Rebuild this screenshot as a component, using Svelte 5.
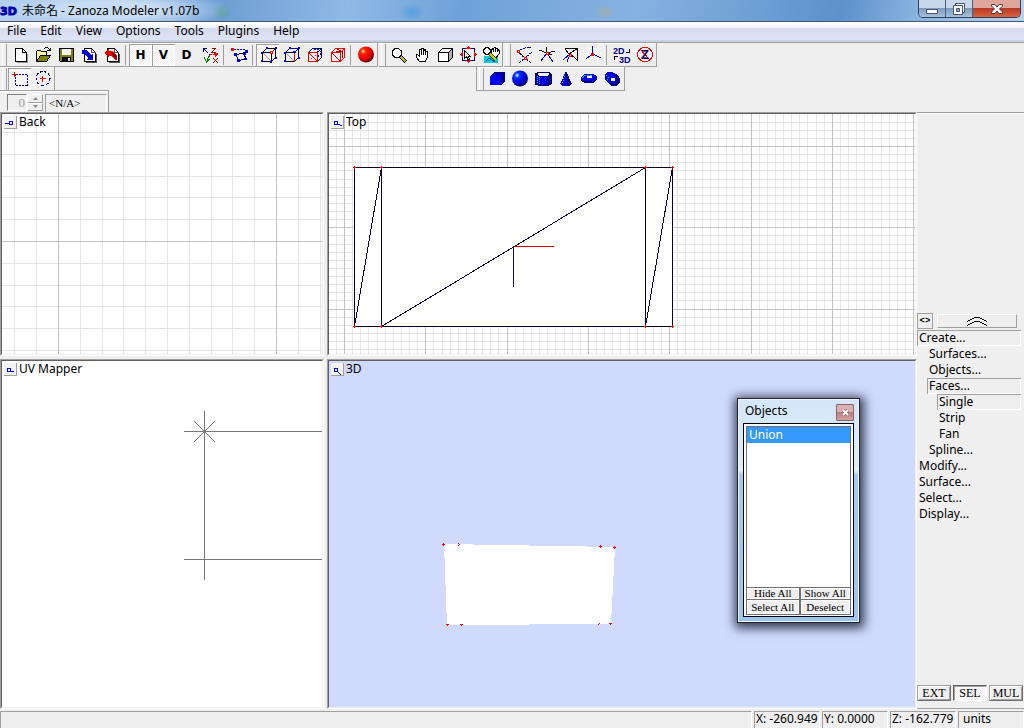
<script lang="ts">
  type Shape = { d?: string; f?: string; s?: string; w?: number; dash?: string; t?: string; x?: number; y?: number; size?: number }

  const cubeLines = 'M3.5 6.5H12.5V15.5H3.5ZM3.5 6.5L7.5 2.5H16.5L12.5 6.5M16.5 2.5V11.5L12.5 15.5'
  const page = 'M4.5 2.5H11.5L15.5 6.5V15.5H4.5Z'

  const icons: Record<string, Shape[]> = {
    New: [{ d: 'M6 16.5H16.5V8', s: '#999' }, { d: page, f: '#fff', s: '#000' }, { d: 'M11.5 2.5V6.5H15.5', s: '#000' }],
    Open: [
      { d: 'M2.5 15.5V5.5L3.5 4.5H6.5L7.5 5.5H12.5V9.5', f: '#ff9', s: '#000' },
      { d: 'M2.5 15.5L6.5 9.5H16.5L12.5 15.5Z', f: '#808000', s: '#000' },
      { d: 'M9.5 3.5L11.5 1.5H13.5L16 4M13 4.5H16.5V1.5', s: '#000' }
    ],
    Save: [
      { d: 'M2.5 2.5H16.5V15.5H3.5L2.5 14.5Z', f: '#808000', s: '#000' },
      { d: 'M5 3H14V9H5Z', f: '#f4f4f4', s: 'none' },
      { d: 'M5 11H14V16H5Z', f: '#000', s: 'none' },
      { d: 'M11 12H13V15H11Z', f: '#ddd', s: 'none' }
    ],
    Import: [
      { d: page, f: '#fff', s: '#000' }, { d: 'M11.5 2.5V6.5H15.5M6 16.5H16.5V8', s: '#555' },
      { d: 'M2 4H6L11 9L13 7V14H6L8 12L4 8H2Z', f: '#0000e0', s: 'none' }
    ],
    Export: [
      { d: page, f: '#fff', s: '#000' }, { d: 'M11.5 2.5V6.5H15.5M6 16.5H16.5V8', s: '#555' },
      { d: 'M1 7L6 3V5H9L14 10V14H12L8 10H6V12Z', f: '#e00000', s: 'none' },
      { d: 'M9 9L14 14V11L10 7Z', f: '#800000', s: 'none' }
    ],
    Axes: [
      { d: 'M9 9L3 3', s: '#00009a', dash: '2 1' },
      { d: 'M2 6V2H6V3H3V6Z', f: '#00009a', s: 'none' },
      { d: 'M9 9L14 8', s: '#f00', dash: '2 1' },
      { d: 'M13 6L18 8L14 11Z', f: '#f00', s: 'none' },
      { d: 'M9 9L6 14M3.5 11.5L5.5 16L8.5 13', s: '#008000' },
      { d: 'M10.5 2.5H14.5L10.5 6.5H14.5M12 12L17 17M17 12L12 17', s: '#900000' }
    ],
    Polyline: [
      { d: 'M4 3.5H15', s: '#00f', dash: '2 1' },
      { d: 'M16 6L6 9L9 15L16 12L14 9', s: '#000' },
      { d: 'M15 4H18V7H15ZM4 7H7V10H4ZM13 7H16V9H13ZM7 13H10V16H7ZM14 12H17V14H14Z', f: '#0000f0', s: 'none' },
      { d: 'M1 2H4V5H1Z', f: '#f00', s: 'none' }
    ],
    Vertices: [
      { d: cubeLines, f: '#f4f4f4', s: '#000' }, { d: 'M4 7L12 15', s: '#999' },
      { d: 'M2 6H4V8H2ZM2 14H4V16H2ZM7 1H9V3H7ZM16 1H18V3H16ZM16 11H18V13H16ZM11 15H13V17H11Z', f: '#00f', s: 'none' },
      { d: 'M11.5 5.5H13.5V7.5H11.5Z', f: '#fff', s: '#f00' }
    ],
    Edges: [
      { d: cubeLines, s: '#000' }, { d: 'M4 7L12 15', s: '#999' },
      { d: 'M3.5 6.5L7.5 2.5H16.5', s: '#00f', dash: '2 1' },
      { d: 'M2 6H4V8H2ZM2 14H4V16H2ZM7 1H9V3H7ZM16 1H18V3H16ZM16 11H18V13H16Z', f: '#00f', s: 'none' },
      { d: 'M12.5 6V16', s: '#f00' }, { d: 'M11 5H14V7H11Z', f: '#00f', s: 'none' }
    ],
    Faces: [
      { d: cubeLines, s: '#000080' }, { d: 'M9 3L14 6M12 3L15 5V10M13 11L16 7', s: '#000080', dash: '2 1' },
      { d: 'M3.5 6.5H12.5V15.5H3.5ZM4 7L12 15', s: '#e00000' }, { d: 'M6 12H7V13H6ZM10 9H11V10H10Z', f: '#f00', s: 'none' }
    ],
    Solids: [{ d: cubeLines, s: '#f00' }, { d: 'M4 7L12 15M8 5H13L9 3M14 5V12', s: '#a00000' }],
    Zoom: [
      { d: 'M5 2.5H8L11.5 5V9L8.5 11.5H5L2.5 9V5Z', f: '#fff', s: '#000' },
      { d: 'M10.5 10.5L16 16', s: '#000', w: 4 }, { d: 'M11 11L15.5 15.5', s: '#c8c000', w: 2 }
    ],
    Pan: [{ d: 'M6.5 15.5L3 10.5V8.5H4.5L6 10V4.5L7 3.5L8.5 4.5V2.5H10.5V4.5L12.5 3.5V6L14.5 5.5V11L12.5 15.5Z', f: '#fff', s: '#000' }, { d: 'M8.5 4V9M10.5 4V9M12.5 5V9', s: '#000' }],
    Orbit: [
      { d: 'M2.5 6.5L6.5 2.5H16.5L12.5 6.5Z', f: '#fff', s: '#000' },
      { d: 'M12.5 6.5L16.5 2.5V11.5L12.5 15.5Z', f: '#b0b0b0', s: '#000' },
      { d: 'M2.5 6.5H12.5V15.5H2.5Z', f: '#fff', s: '#000' }
    ],
    Fit: [
      { d: 'M3.5 2.5H15.5V14.5H3.5Z', s: '#000080' },
      { d: 'M9.5 0L12 3H7ZM9.5 17L12 14H7ZM1 8.5L4 6V11ZM18 8.5L15 6V11Z', f: '#f00', s: 'none' },
      { d: 'M5.5 4.5V12.5L7.5 10.5L9.5 14.5L10.5 13.5L9 10H11Z', f: '#eee', s: '#000' }
    ],
    Region: [
      { d: 'M2 10H16V17H2Z', f: '#00c8d8', s: 'none' },
      { d: 'M3.5 15.5L7 12L13 16', s: '#0050a0' },
      { d: 'M4 1.5H6L8.5 4V6L6 8.5H4L1.5 6V4Z', f: '#fff', s: '#000' },
      { d: 'M11 11L9.5 7V3.5L11.5 2.5L13 1.5L15 2.5L17 4.5V8L14.5 11Z', f: '#fff', s: '#000' }, { d: 'M11.5 3V6M13.5 2V6M15.5 3V6', s: '#000' },
      { d: 'M8 8L14 14', s: '#404000', w: 3 }, { d: 'M8 8L14 14', s: '#d0c800', w: 2 }
    ],
    'Snap end': [{ d: 'M3 5L10 2L16 1M3 6L10 12L17 6M10 12L4 17M10 12L16 17', s: '#00d', dash: '4 1' }, { d: 'M5 7L9 11M11 13L13 15', s: '#000' }, { d: 'M2.5 4.5H4.5V6.5H2.5ZM9.5 11.5H11.5V13.5H9.5Z', f: '#fff', s: '#f00' }],
    'Snap point': [{ d: 'M1 4L9 7L17 5M9 7L8 1M9 7L14 9', s: '#000' }, { d: 'M9 7L3 15M9 7L15 16', s: '#00d' }, { d: 'M8.5 6.5H10.5V8.5H8.5Z', f: '#fff', s: '#f00' }],
    'Snap face': [{ d: 'M4 3L8 8L16.5 2.5V14L9 8M4 3L16.5 2.5', s: '#000' }, { d: 'M9 8L2 14M9 8L6 16', s: '#00d' }, { d: 'M8.5 8.5H10.5V10.5H8.5Z', f: '#fff', s: '#f00' }],
    'Snap grid': [{ d: 'M1 2.5H17M1 7.5H17M1 12.5H17M3.5 1V16M8.5 1V16M13.5 1V16', s: '#fff' }, { d: 'M8.5 0V8L2 13M8.5 8L17 12', s: '#00d' }, { d: 'M7 7H10V10H7Z', f: '#f00', s: 'none' }],
    '2D to 3D': [
      { t: '2D', x: 0, y: 8, size: 9, f: '#000080' }, { t: '3D', x: 6, y: 17, size: 9, f: '#000080' },
      { d: 'M16.5 3V6.5H13M1.5 14V10.5H5', s: '#000' }
    ],
    Zanoza: [{ d: 'M9 1.5A7.5 7 0 1 0 9 15.5A7.5 7 0 1 0 9 1.5M4 3L14 14', s: '#f00' }, { t: 'Z', x: 5, y: 13, size: 13, f: '#000060' }],
    'Select box': [{ d: 'M4.5 4.5H16.5V15.5H4.5Z', s: '#000080', dash: '2 1' }, { d: 'M1 4.5H6M3.5 2V7', s: '#f00' }],
    'Select circle': [{ d: 'M9 1.5A7 7 0 1 0 9 15.5A7 7 0 1 0 9 1.5', s: '#000080', dash: '3 2' }, { d: 'M6 8.5H12M8.5 6V12', s: '#f00' }],
    Box: [{ d: 'M2 6L6 2H17V11L13 15H2Z', f: '#000080', s: 'none' }, { d: 'M2 6H13V15H2Z', f: '#0000f8', s: 'none' }, { d: 'M3 5.5L6 2.5H16L13 5.5Z', f: '#0000c8', s: 'none' }],
    Cylinder: [
      { d: 'M1.5 4L5 2H14L17 4V14L14 15.5H5L1.5 14Z', f: '#0000f0', s: '#000060' },
      { d: 'M13 5H17V14L13 15Z', f: '#000090', s: 'none' },
      { d: 'M3.5 6V14M5.5 7V15', s: '#00d0f0', dash: '1 1' },
      { d: 'M2 4L5 2H14L17 4L14 6H5Z', f: '#f4f4f4', s: '#000060' }
    ],
    Cone: [{ d: 'M9 1L15 14L12 16H6L3 14Z', f: '#0000e0', s: 'none' }, { d: 'M9 1L15 14L12 16L10 16Z', f: '#000080', s: 'none' }, { d: 'M7.5 6L5.5 14', s: '#00d0f0', dash: '1 1' }],
    Torus: [{ d: 'M1 7L4 4H13L17 6V10L13 13H5L1 11Z', f: '#0000e0', s: 'none' }, { d: 'M1 9L5 11H13L17 8V10L13 13H5L1 11Z', f: '#000080', s: 'none' }, { d: 'M7 6H12V8H7Z', f: '#f0f0f0', s: 'none' }, { d: 'M2 7.5L5 5.5H12', s: '#00d0f0', dash: '2 1' }],
    Tube: [{ d: 'M2 4L4 2H9L15 5L17 9V12L13 16H9L5 13L2 9Z', f: '#0000e0', s: 'none' }, { d: 'M9 3L15 5L17 9V12L13 16H9L6 13L13 13V7Z', f: '#000080', s: 'none' }, { d: 'M8 8H12V11H8Z', f: '#f0f0f0', s: 'none' }, { d: 'M3 5.5L6 3.5M4 9.5L7 6.5', s: '#00d0f0', dash: '1 1' }]
  }

  const mainTools = ['New', 'Open', 'Save', 'Import', 'Export', '|', 'H', 'V', 'D', 'Axes', '|', 'Polyline', '|', 'Vertices', 'Edges', 'Faces', 'Solids', '|', 'Sphere']
  const viewTools = ['Zoom', 'Pan', 'Orbit', 'Fit', 'Region']
  const snapTools = ['Snap end', 'Snap point', 'Snap face', 'Snap grid', '|', '2D to 3D', 'Zanoza']
  const selectTools = ['Select box', 'Select circle']
  const primitives = ['Box', 'Ball', 'Cylinder', 'Cone', 'Torus', 'Tube']
  const menus = ['File', 'Edit', 'View', 'Options', 'Tools', 'Plugins', 'Help']

  let pressed = $state(['H', 'V', 'Vertices', 'Select box'])
  let mode = $state('SEL')

  const commands = [
    { name: 'Create...', level: 0, open: true },
    { name: 'Surfaces...', level: 1 },
    { name: 'Objects...', level: 1 },
    { name: 'Faces...', level: 1, open: true },
    { name: 'Single', level: 2, open: true },
    { name: 'Strip', level: 2 },
    { name: 'Fan', level: 2 },
    { name: 'Spline...', level: 1 },
    { name: 'Modify...', level: 0 },
    { name: 'Surface...', level: 0 },
    { name: 'Select...', level: 0 },
    { name: 'Display...', level: 0 }
  ]

  // every tenth line is a major one
  function gridPath(x0: number, y0: number, step: number, major: boolean) {
    let d = ''
    for (let i = -10; i < 250; i++) {
      if ((i % 10 === 0) !== major) continue
      d += `M${Math.round(x0 + i * step) + 0.5} 0V2000M0 ${Math.round(y0 + i * step) + 0.5}H2500`
    }
    return d
  }

  function cross(points: number[][]) {
    return points.map(([x, y]) => `M${x - 1} ${y + 0.5}H${x + 2}M${x + 0.5} ${y - 1}V${y + 2}`).join('')
  }

  function toggle(name: string) {
    pressed = pressed.includes(name) ? pressed.filter((p) => p !== name) : [...pressed, name]
  }
</script>

{#snippet tools(list: string[])}
  <i class="grip"></i>
  {#each list as name}
    {#if name === '|'}
      <i class="sep"></i>
    {:else}
      <button class="tool" class:down={pressed.includes(name)} aria-label={name} onclick={() => toggle(name)}>
        {#if name.length === 1}
          {name}
        {:else if name === 'Sphere' || name === 'Ball'}
          <svg width="18" height="18" viewBox="0 0 18 18" aria-hidden="true">
            <defs>
              <radialGradient id={name} cx="0.32" cy="0.3" r="0.75">
                <stop offset="0" stop-color={name === 'Ball' ? '#c0ffff' : '#ffff90'} />
                <stop offset="0.22" stop-color={name === 'Ball' ? '#0030ff' : '#ff2000'} />
                <stop offset="0.6" stop-color={name === 'Ball' ? '#0000e0' : '#f00000'} />
                <stop offset="1" stop-color={name === 'Ball' ? '#000060' : '#600000'} />
              </radialGradient>
            </defs>
            <circle cx="9" cy="8.5" r="8" fill="url(#{name})" />
          </svg>
        {:else}
          <svg width="18" height="18" viewBox="0 0 18 18" shape-rendering="crispEdges" aria-hidden="true">
            {#each icons[name] as p}
              {#if p.t}
                <text x={p.x} y={p.y} font-size={p.size} fill={p.f}>{p.t}</text>
              {:else}
                <path d={p.d} fill={p.f ?? 'none'} stroke={p.s} stroke-width={p.w ?? 1} stroke-dasharray={p.dash} />
              {/if}
            {/each}
          </svg>
        {/if}
      </button>
    {/if}
  {/each}
{/snippet}

{#snippet viewLabel(name: string, d: string)}
  <header>
    <button aria-label="{name} view menu">
      <svg width="11" height="10" viewBox="0 0 11 10" shape-rendering="crispEdges"><path {d} fill="none" stroke="#00f" /></svg>
    </button>
    <span>{name}</span>
  </header>
{/snippet}

<div class="app">
  <div class="title">
    <svg width="18" height="12" viewBox="0 0 18 12" aria-hidden="true">
      <text x="0" y="10" class="logo">3D</text>
    </svg>
    <span>未命名 - Zanoza Modeler v1.07b</span>
    <div class="winbtns">
      <button class="min" aria-label="Minimize">
        <svg width="14" height="14" viewBox="0 0 14 14"><path d="M1.5 7.5H12.5V11.5H1.5Z" fill="#fff" stroke="#4a5468" /></svg>
      </button>
      <button class="max" aria-label="Restore">
        <svg width="14" height="14" viewBox="0 0 14 14"><path d="M3.5 1.5H12.5V10.5H3.5Z" fill="#fff" stroke="#4a5468" /><path d="M1.5 3.5H10.5V12.5H1.5Z" fill="#fff" stroke="#4a5468" /><path d="M4.5 6.5H7.5V9.5H4.5Z" fill="#8fa8c4" stroke="#4a5468" /></svg>
      </button>
      <button class="close" aria-label="Close">
        <svg width="14" height="14" viewBox="0 0 14 14"><path d="M1.5 2.5H5L7 5L9 2.5H12.5V4L9.5 7L12.5 10V11.5H9L7 9L5 11.5H1.5V10L4.5 7L1.5 4Z" fill="#fff" stroke="#5a3a44" /></svg>
      </button>
    </div>
  </div>

  <nav>
    {#each menus as item}
      <button>{item}</button>
    {/each}
  </nav>

  <div class="bars top">
    <div class="band">{@render tools(mainTools)}</div>
    <div class="band">{@render tools(viewTools)}</div>
    <div class="band">{@render tools(snapTools)}</div>
  </div>
  <div class="bars">
    <div class="band">{@render tools(selectTools)}</div>
    <div class="band prims">{@render tools(primitives)}</div>
  </div>
  <div class="bars third">
    <div class="state">
      <input aria-label="Frame" value="0" disabled />
      <div class="spin">
        <button aria-label="Up" disabled><svg width="5" height="3" viewBox="0 0 5 3"><path d="M0 3L2.5 0L5 3Z" fill="#888" /></svg></button>
        <button aria-label="Down" disabled><svg width="5" height="3" viewBox="0 0 5 3"><path d="M0 0L2.5 3L5 0Z" fill="#888" /></svg></button>
      </div>
      <output>&lt;N/A&gt;</output>
    </div>
  </div>

  <main>
    <div class="views">
      <section class="view">
        <svg class="scene" shape-rendering="crispEdges" fill="none">
          <path d={gridPath(56, 127, 21.8, false)} stroke="#e4e4e4" />
          <path d={gridPath(56, 127, 21.8, true)} stroke="#c4c4c4" />
        </svg>
        {@render viewLabel('Back', 'M1 5.5H5M5.5 3.5H8.5V6.5H5.5Z')}
      </section>

      <section class="view">
        <svg class="scene" shape-rendering="crispEdges" fill="none">
          <path d={gridPath(15, 32, 8.13, false)} stroke="#e4e4e4" />
          <path d={gridPath(15, 32, 8.13, true)} stroke="#c4c4c4" />
          <path d="M25.5 53.5H343.5V212.5H25.5Z" fill="#fff" stroke="#000028" />
          <path d="M52.5 53V212M316.5 53V212M25.5 212.5L52.5 53.5M52.5 212.5L316.5 53.5M316.5 212.5L343.5 53.5" stroke="#000028" />
          <path d="M185 132.5H225" stroke="#d00000" />
          <path d="M184.5 132V173" stroke="#101060" />
          <path d={cross([[25, 53], [52, 53], [316, 53], [343, 53], [25, 212], [52, 212], [316, 212], [343, 212]])} stroke="#f00" />
        </svg>
        {@render viewLabel('Top', 'M3.5 3.5H6.5V6.5H3.5ZM6 6.5H9M9 7.5H11')}
      </section>

      <section class="view">
        <svg class="scene" shape-rendering="crispEdges" fill="none">
          <path d="M182 70.5H2500M182 198.5H2500M202.5 50V219M192 60L213 81M192 81L213 60" stroke="#787878" />
          <path d="M201 69H204V72H201Z" fill="#787878" />
        </svg>
        {@render viewLabel('UV Mapper', 'M3.5 3.5H6.5V6.5H3.5ZM6 6.5H10')}
      </section>

      <section class="view solid">
        <svg class="scene" shape-rendering="crispEdges" fill="none">
          <path d="M115 183L286 186L282 263L118 264Z" fill="#fff" />
          <path d={cross([[114, 183], [271, 185], [285, 186]])} stroke="#f00" />
          <path d="M129 182.5H130M130 183.5H131M129 184.5H130M117 263.5H120M118.5 264V265M131 263.5H134M132.5 264V265M280 262.5H283M281.5 263V264M269 263.5H270M270 262.5H271" stroke="#f00" />
        </svg>
        {@render viewLabel('3D', 'M3.5 3.5H6.5V6.5H3.5ZM7 7L10 10')}
      </section>
    </div>

    <aside>
      <div class="fold">
        <button class="swap">&lt;&gt;</button>
        <button class="up" aria-label="Collapse">
          <svg width="22" height="10" viewBox="0 0 22 10" shape-rendering="crispEdges" fill="none" stroke="#000"><path d="M1 5.5L9 1.5H13L21 5.5M1 9.5L9 5.5H13L21 9.5" /></svg>
        </button>
      </div>
      <ul>
        {#each commands as c}
          <li class="l{c.level}"><button class:open={c.open}>{c.name}</button></li>
        {/each}
      </ul>
      <div class="modes">
        {#each ['EXT', 'SEL', 'MUL'] as m}
          <button class:on={mode === m} onclick={() => (mode = m)}>{m}</button>
        {/each}
      </div>
    </aside>
  </main>

  <footer>
    <span></span>
    <span>X: -260.949</span>
    <span>Y: 0.0000</span>
    <span>Z: -162.779</span>
    <span class="units">units</span>
  </footer>

  <div class="dialog" role="dialog" aria-labelledby="objTitle">
    <div class="dhead">
      <span id="objTitle">Objects</span>
      <button aria-label="Close objects">
        <svg width="9" height="9" viewBox="0 0 9 9"><path d="M2 2L7 7M7 2L2 7" stroke="#755" stroke-width="3" /><path d="M2 2L7 7M7 2L2 7" stroke="#fff" stroke-width="2" /></svg>
      </button>
    </div>
    <div class="dbody">
      <ul><li>Union</li></ul>
      <div class="acts">
        <button>Hide All</button>
        <button>Show All</button>
        <button>Select All</button>
        <button>Deselect</button>
      </div>
    </div>
  </div>
</div>

<style>
  :global(body) {
    background: #efefef;
    overflow: hidden;
  }

  .app {
    position: relative;
    display: flex;
    flex-direction: column;
    height: 100vh;
    font: 12px/16px "Noto Sans", "Noto Sans CJK TC", sans-serif;
    color: #000;
    cursor: default;
  }

  .app * {
    box-sizing: border-box;
  }

  button, input {
    font: inherit;
    color: inherit;
    margin: 0;
    padding: 0;
    border: 0;
    border-radius: 0;
    background: none;
  }

  svg {
    display: block;
    flex: none;
  }

  ul {
    list-style: none;
    margin: 0;
    padding: 0;
  }

  .title {
    display: flex;
    align-items: center;
    flex: none;
    height: 22px;
    gap: 4px;
    border-bottom: 1px solid #45546c;
    background:
      radial-gradient(ellipse 120px 20px at 110px 10px, #c8ddf3 40%, transparent),
      radial-gradient(ellipse 10px 8px at 222px 12px, #5b9fa0, transparent),
      radial-gradient(ellipse 12px 9px at 412px 12px, #559fe0, transparent),
      radial-gradient(ellipse 10px 8px at 605px 12px, #a0adae, transparent),
      linear-gradient(100deg, #b4d0ee 0, #6f9fd4 22%, #8fb9e6 34%, #6fa1d8 45%, #86b2e2 62%, #5d91cb 82%, #8cb6e2 90%, #b9d3ee);
  }

  .logo {
    font: bold 11px "DejaVu Sans", sans-serif;
    fill: #0000b0;
    stroke: #0000b0;
  }

  .winbtns {
    display: flex;
    align-self: flex-start;
    margin-left: auto;
    margin-right: 3px;
    height: 18px;
    border: 1px solid #2f4058;
    border-top: 0;
    border-radius: 0 0 5px 5px;
    overflow: hidden;
  }

  .winbtns button {
    display: flex;
    align-items: center;
    justify-content: center;
    width: 27px;
    border-right: 1px solid #4b6080;
    background: linear-gradient(#c6d8ea 0 45%, #7d9cbf 50%, #a6c2dd);
  }

  .winbtns .close {
    width: 47px;
    border-right: 0;
    background: linear-gradient(#dfa69c 0 45%, #b93a26 50%, #d8623e);
  }

  nav {
    display: flex;
    flex: none;
    height: 20px;
    border-bottom: 2px solid #c8cfe0;
    background: linear-gradient(#fff, #edf0f8 35%, #d5dbed 36%, #dfe4f5);
  }

  nav button {
    padding: 0 7px 1px;
  }

  .bars {
    display: flex;
    flex: none;
  }

  .top {
    gap: 1px;
    border-top: 1px solid #a0a0a0;
  }

  .band {
    display: flex;
    height: 24px;
    padding-top: 1px;
    border-right: 1px solid #a0a0a0;
    box-shadow: inset 0 1px #fff;
  }

  .top .band, .prims {
    border-bottom: 1px solid #a0a0a0;
  }

  .prims {
    margin-left: 421px;
    padding-right: 1px;
    border-left: 1px solid #a0a0a0;
  }

  .grip {
    width: 5px;
    margin: 0 1px 0 2px;
    border-left: 1px solid #fff;
    border-right: 1px solid #a0a0a0;
  }

  .sep {
    width: 4px;
    margin: 1px 0 1px 2px;
    border-left: 1px solid #a0a0a0;
  }

  .tool {
    display: flex;
    align-items: center;
    justify-content: center;
    width: 23px;
    height: 22px;
    font: bold 12px "DejaVu Sans", sans-serif;
  }

  .tool text {
    font-family: "Liberation Sans", sans-serif;
  }

  .down, .on {
    background: repeating-conic-gradient(#fff 0 25%, #efefef 0 50%) 0 0 / 2px 2px;
    box-shadow: inset 1px 1px #a0a0a0, inset -1px -1px #fff;
  }

  .third {
    height: 21px;
  }

  .state {
    display: flex;
    width: 109px;
    padding: 3px 1px 0 7px;
    border-right: 1px solid #a0a0a0;
    border-top: 1px solid #a0a0a0;
    margin-top: -1px;
    box-shadow: inset 0 1px #fff;
  }

  .state input {
    width: 20px;
    height: 17px;
    padding-right: 1px;
    text-align: right;
    color: #a0a0a0;
    border: 1px solid #fff;
    border-top-color: #808080;
    border-left-color: #808080;
    font: 13px/15px "Liberation Serif", serif;
  }

  .spin {
    display: flex;
    flex-direction: column;
    width: 16px;
    height: 17px;
  }

  .spin button {
    display: flex;
    align-items: center;
    justify-content: center;
    flex: 1;
    border: 1px solid #a0a0a0;
    border-top-color: #fff;
    border-left-color: #fff;
  }

  .state output {
    flex: 1;
    margin-left: 2px;
    padding-left: 3px;
    border-top: 1px solid #a0a0a0;
    border-left: 1px solid #a0a0a0;
    border-right: 1px solid #fff;
    font: 11px/16px "Liberation Serif", serif;
  }

  main {
    display: flex;
    flex: 1;
    min-height: 0;
    margin-bottom: 2px;
  }

  .views {
    display: grid;
    flex: 1;
    min-width: 0;
    grid-template-columns: minmax(0, 324fr) minmax(0, 590fr);
    grid-template-rows: minmax(0, 244fr) minmax(0, 350fr);
    gap: 3px;
  }

  .view {
    position: relative;
    overflow: hidden;
    background: #fff;
    border: 1px solid #fff;
    border-top-color: #a0a0a0;
    border-left-color: #a0a0a0;
    padding: 1px;
  }

  .view::after {
    content: "";
    position: absolute;
    inset: 0;
    border: 1px solid #efefef;
    border-top-color: #606060;
    border-left-color: #606060;
    pointer-events: none;
  }

  .solid {
    background: #d0daff;
  }

  .scene {
    position: absolute;
    inset: 1px;
    width: calc(100% - 2px);
    height: calc(100% - 2px);
  }

  .view header {
    position: relative;
    display: flex;
    gap: 2px;
    padding-left: 2px;
  }

  .view header button {
    width: 13px;
    height: 13px;
    margin-top: 2px;
    background: #f2f2f2;
    box-shadow: inset -1px -1px #a0a0a0;
  }

  aside {
    display: flex;
    flex-direction: column;
    width: 107px;
    border-top: 1px solid #a0a0a0;
    border-bottom: 1px solid #a0a0a0;
    box-shadow: inset 0 1px #fff;
  }

  aside::before {
    content: "";
    flex: 11 1 0;
  }

  .fold {
    display: flex;
    align-items: center;
    gap: 4px;
    padding-right: 7px;
  }

  .swap {
    width: 16px;
    height: 16px;
    border: 1px solid #707070;
    border-top-color: #fff;
    border-left-color: #fff;
    outline: 1px solid #a0a0a0;
    outline-offset: -1px;
    font: bold 9px/12px "Liberation Mono", monospace;
    text-align: center;
  }

  .up {
    display: flex;
    align-items: center;
    justify-content: center;
    flex: 1;
    height: 14px;
    border: 1px solid #a0a0a0;
    border-top-color: #fff;
    border-left-color: #fff;
  }

  aside ul {
    flex: 9 1 192px;
    margin: 1px 3px 0 0;
  }

  aside li button {
    display: block;
    width: 100%;
    height: 16px;
    padding-left: 2px;
    text-align: left;
    line-height: 16px;
  }

  aside .l1 {
    padding-left: 10px;
  }

  aside .l2 {
    padding-left: 20px;
  }

  .open {
    box-shadow: inset 1px 1px #a0a0a0, inset -1px -1px #fff;
  }

  .modes {
    display: flex;
    gap: 2px;
    margin: 0 1px 7px 0;
  }

  .modes button {
    flex: 1;
    height: 16px;
    font: 12px/14px "Liberation Serif", serif;
    border: 1px solid #707070;
    border-top-color: #a0a0a0;
    border-left-color: #a0a0a0;
    box-shadow: inset 1px 1px #fff, inset -1px -1px #a0a0a0;
  }

  .modes .on {
    border-color: #606060 #fff #fff #606060;
    box-shadow: inset 1px 1px #a0a0a0;
  }

  footer {
    display: flex;
    flex: none;
    gap: 2px;
    height: 17px;
    line-height: 14px;
  }

  footer span {
    width: 66px;
    padding-left: 1px;
    white-space: nowrap;
    overflow: hidden;
    border-top: 1px solid #a0a0a0;
    border-left: 1px solid #a0a0a0;
    border-right: 1px solid #fff;
  }

  footer span:first-child {
    flex: 1;
  }

  footer .units {
    padding-left: 4px;
  }

  .dialog {
    position: absolute;
    top: 398px;
    right: 164px;
    width: 123px;
    height: 225px;
    display: flex;
    flex-direction: column;
    padding: 0 5px 5px;
    border: 1px solid #20242c;
    background: linear-gradient(#d4e6f8, #dcebf9 30%, #e4f0fc 32%, #a6cbf2 34%, #9cc4f2);
    box-shadow: inset 0 0 0 1px #f0f6fc, 1px 2px 10px 3px #30364c;
  }

  .dhead {
    display: flex;
    align-items: center;
    justify-content: space-between;
    height: 24px;
    padding-left: 2px;
  }

  .dhead button {
    display: flex;
    align-items: center;
    justify-content: center;
    width: 18px;
    height: 17px;
    margin-top: 3px;
    border: 1px solid #8a6470;
    border-radius: 1px;
    background: linear-gradient(#dcb0b0 45%, #bd7d7d 50%, #d3a3a0);
  }

  .dbody {
    display: flex;
    flex-direction: column;
    flex: 1;
    border: 1px solid #000;
    padding: 2px 2px 1px;
    background: #fff;
    min-height: 0;
  }

  .dbody ul {
    flex: 1;
    border: 1px solid #707070;
  }

  .dbody li {
    padding-left: 2px;
    color: #fff;
    background: #3399ff;
  }

  .acts {
    display: grid;
    grid-template-columns: 53fr 51fr;
    grid-template-rows: 12px 15px;
    background: #efefef;
  }

  .acts button {
    font: 11px/11px "Liberation Serif", serif;
    white-space: nowrap;
    overflow: hidden;
    border: 1px solid #707070;
    border-top: 0;
    box-shadow: inset 1px 1px #fff, inset -1px -1px #fff;
  }
</style>
